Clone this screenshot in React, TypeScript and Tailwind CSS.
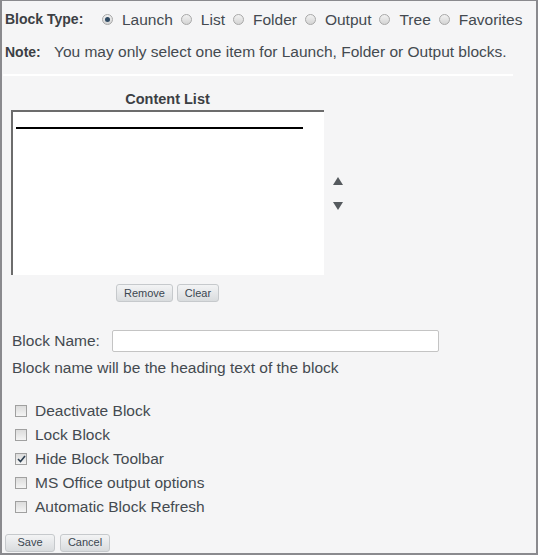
const font = { fontFamily: '"Liberation Sans", Arial, sans-serif' };

function Radio({ checked }: { checked?: boolean }) {
  return (
    <span className="inline-flex h-[11px] w-[11px] items-center justify-center rounded-full border border-[#a8a8a8] bg-gradient-to-b from-[#f2f2f2] to-[#d4d4d4]">
      {checked && <span className="h-[5px] w-[5px] rounded-full bg-[#2f4a63]" />}
    </span>
  );
}

function Checkbox({ checked }: { checked?: boolean }) {
  return (
    <span className="inline-flex h-[12px] w-[12px] items-center justify-center border border-[#a0a0a0] bg-gradient-to-b from-[#dcdcdc] to-[#f4f4f4]">
      {checked && (
        <svg width="9" height="8" viewBox="0 0 9 8">
          <path d="M1 4 L3.5 6.5 L8 1" fill="none" stroke="#2c3e50" strokeWidth="1.6" />
        </svg>
      )}
    </span>
  );
}

function Btn({ label, w }: { label: string; w: string }) {
  return (
    <button
      className={`${w} h-[18px] rounded-[3px] border border-[#c6c9cc] bg-gradient-to-b from-[#f3f4f5] to-[#d9dcde] text-[11px] leading-none text-[#3b4650]`}
    >
      {label}
    </button>
  );
}

const types = ["Launch", "List", "Folder", "Output", "Tree", "Favorites"];
const options = [
  { label: "Deactivate Block", checked: false },
  { label: "Lock Block", checked: false },
  { label: "Hide Block Toolbar", checked: true },
  { label: "MS Office output options", checked: false },
  { label: "Automatic Block Refresh", checked: false },
];

export default function App() {
  return (
    <div
      style={font}
      className="flex h-[555px] w-[538px] flex-col border-2 border-t border-[#8a8a8e] bg-[#f5f5f6] text-[15.5px] text-[#444a50]"
    >
      <div className="flex h-[36px] items-center pl-[3px] pt-[1px]">
        <span className="w-[97px] text-[14px] font-bold text-[#3c3f44]">Block Type:</span>
        {types.map((t, i) => (
          <span key={t} className="flex items-center">
            <Radio checked={i === 0} />
            <span className="ml-[9px] mr-[8px]">{t}</span>
          </span>
        ))}
      </div>
      <div className="flex h-[30px] items-center pl-[3px]">
        <span className="w-[49px] text-[14px] font-bold text-[#3c3f44]">Note:</span>
        <span>You may only select one item for Launch, Folder or Output blocks.</span>
      </div>
      <div className="ml-[1px] mt-[7px] h-[2px] w-[510px] bg-white" />

      <div className="mt-[12px] flex items-center pl-[9px]">
        <div className="flex w-[313px] flex-col items-center">
          <div className="h-[22px] pt-[1px] text-[14.5px] font-bold text-[#3c3f44]">Content List</div>
          <div className="h-[165px] w-[313px] border-l-2 border-t-2 border-[#6c6c6c] bg-white pl-[3px] pt-[15px]">
            <div className="h-[2px] w-[287px] bg-black" />
          </div>
          <div className="mt-[9px] flex gap-[4px]">
            <Btn label="Remove" w="w-[57px]" />
            <Btn label="Clear" w="w-[42px]" />
          </div>
        </div>
        <div className="ml-[9px] flex flex-col gap-[17px] pb-[4px]">
          <svg width="10" height="8" viewBox="0 0 10 8">
            <path d="M5 0 L10 8 L0 8 Z" fill="#555a5e" />
          </svg>
          <svg width="10" height="8" viewBox="0 0 10 8">
            <path d="M0 0 L10 0 L5 8 Z" fill="#555a5e" />
          </svg>
        </div>
      </div>

      <div className="mt-[27px] flex items-center pl-[10px]">
        <span className="w-[100px]">Block Name:</span>
        <div className="h-[22px] w-[327px] rounded-[2px] border border-[#c4c4c4] bg-white" />
      </div>
      <div className="mt-[4px] pl-[10px]">Block name will be the heading text of the block</div>

      <div className="mt-[19px] flex flex-col pl-[13px]">
        {options.map((o) => (
          <div key={o.label} className="flex h-[24px] items-center">
            <Checkbox checked={o.checked} />
            <span className="ml-[8px]">{o.label}</span>
          </div>
        ))}
      </div>

      <div className="mt-[15px] flex gap-[5px] pl-[3px]">
        <Btn label="Save" w="w-[50px]" />
        <Btn label="Cancel" w="w-[50px]" />
      </div>
    </div>
  );
}
